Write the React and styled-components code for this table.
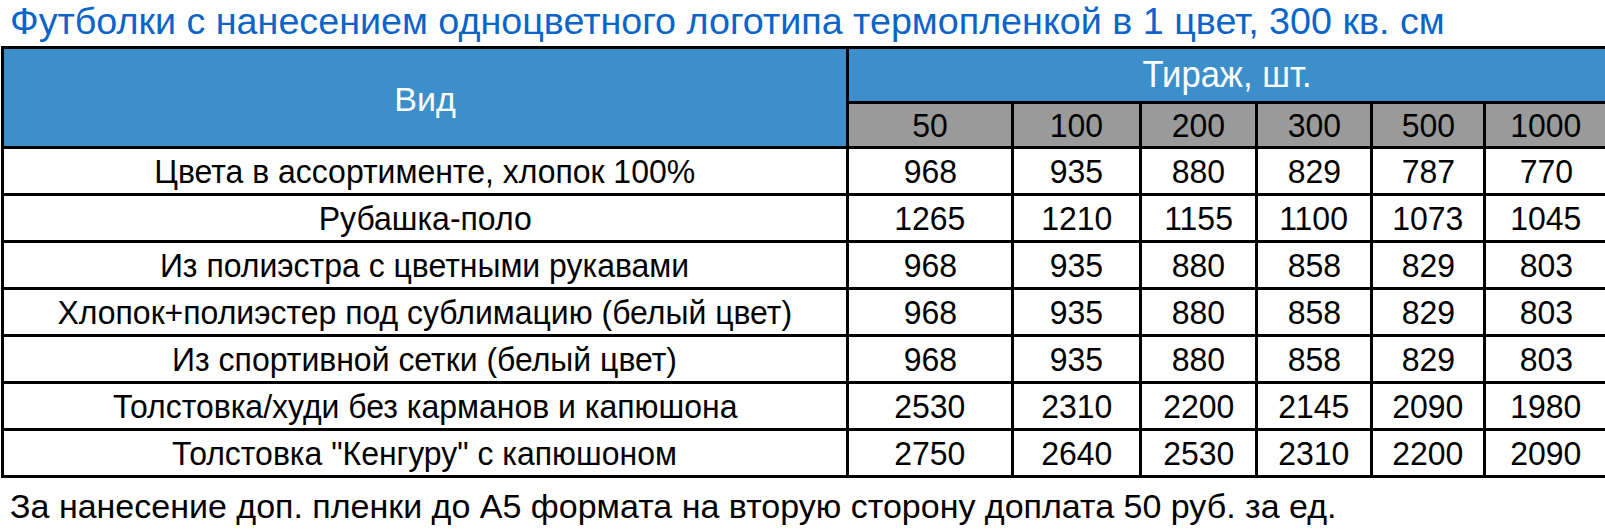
import React from 'react'
import styled, { createGlobalStyle } from 'styled-components'

const GlobalStyle = createGlobalStyle`
  html, body {
    margin: 0;
    padding: 0;
    background: #fff;
    overflow: hidden;
  }
`

const Page = styled.div`
  width: 1605px;
  height: 529px;
  overflow: hidden;
  font-family: "Liberation Sans", Arial, sans-serif;
  color: #000;
`

const Title = styled.h1`
  margin: 0 0 4px 10px;
  font-weight: normal;
  font-size: 37.7px;
  line-height: 42px;
  color: #0b64c8;
  white-space: nowrap;
`

// black background + gaps draw the cell borders
const Table = styled.div`
  display: grid;
  grid-template-columns: 842px 162px 125px 113px 112px 110px 120px;
  grid-template-rows: 52px 42px repeat(7, 44px);
  gap: 3px;
  padding: 3px;
  margin-left: 1px;
  width: max-content;
  background: #000;
`

const Cell = styled.div`
  display: flex;
  align-items: center;
  justify-content: center;
  font-size: 34px;
  line-height: 1;
  white-space: nowrap;
  overflow: hidden;
  background: ${({ $tone }) =>
    $tone === 'blue' ? '#3c8fca' : $tone === 'gray' ? '#9a9a9a' : '#fff'};
  color: ${({ $tone }) => ($tone === 'blue' ? '#fff' : '#000')};
`

const HeadKind = styled(Cell)`
  grid-row: span 2;
  padding-top: 2px;
`

const HeadRun = styled(Cell)`
  grid-column: span 6;
  font-size: 36px;
`

// the sheet uses a slightly condensed face
const Narrow = styled.span`
  display: inline-block;
  transform: scaleX(${({ $sx }) => $sx || 0.94});
`

const Note = styled.p`
  margin: 9px 0 0 10px;
  font-size: 34px;
  line-height: normal;
  white-space: nowrap;
`

const runs = [50, 100, 200, 300, 500, 1000]

const rows = [
  { name: 'Цвета в ассортименте, хлопок 100%', prices: [968, 935, 880, 829, 787, 770] },
  { name: 'Рубашка-поло', prices: [1265, 1210, 1155, 1100, 1073, 1045] },
  { name: 'Из полиэстра с цветными рукавами', prices: [968, 935, 880, 858, 829, 803] },
  { name: 'Хлопок+полиэстер под сублимацию (белый цвет)', prices: [968, 935, 880, 858, 829, 803] },
  { name: 'Из спортивной сетки (белый цвет)', prices: [968, 935, 880, 858, 829, 803] },
  { name: 'Толстовка/худи без карманов и капюшона', prices: [2530, 2310, 2200, 2145, 2090, 1980] },
  { name: 'Толстовка "Кенгуру" с капюшоном', prices: [2750, 2640, 2530, 2310, 2200, 2090] },
]

export default function App() {
  return (
    <Page>
      <GlobalStyle />
      <Title>Футболки с нанесением одноцветного логотипа термопленкой в 1 цвет, 300 кв. см</Title>
      <Table>
        <HeadKind $tone="blue">Вид</HeadKind>
        <HeadRun $tone="blue"><Narrow $sx={0.96}>Тираж, шт.</Narrow></HeadRun>
        {runs.map(r => (
          <Cell key={r} $tone="gray"><Narrow>{r}</Narrow></Cell>
        ))}
        {rows.map(row => (
          <React.Fragment key={row.name}>
            <Cell><Narrow>{row.name}</Narrow></Cell>
            {row.prices.map((p, i) => (
              <Cell key={i}><Narrow>{p}</Narrow></Cell>
            ))}
          </React.Fragment>
        ))}
      </Table>
      <Note>За нанесение доп. пленки до А5 формата на вторую сторону доплата 50 руб. за ед.</Note>
    </Page>
  )
}
